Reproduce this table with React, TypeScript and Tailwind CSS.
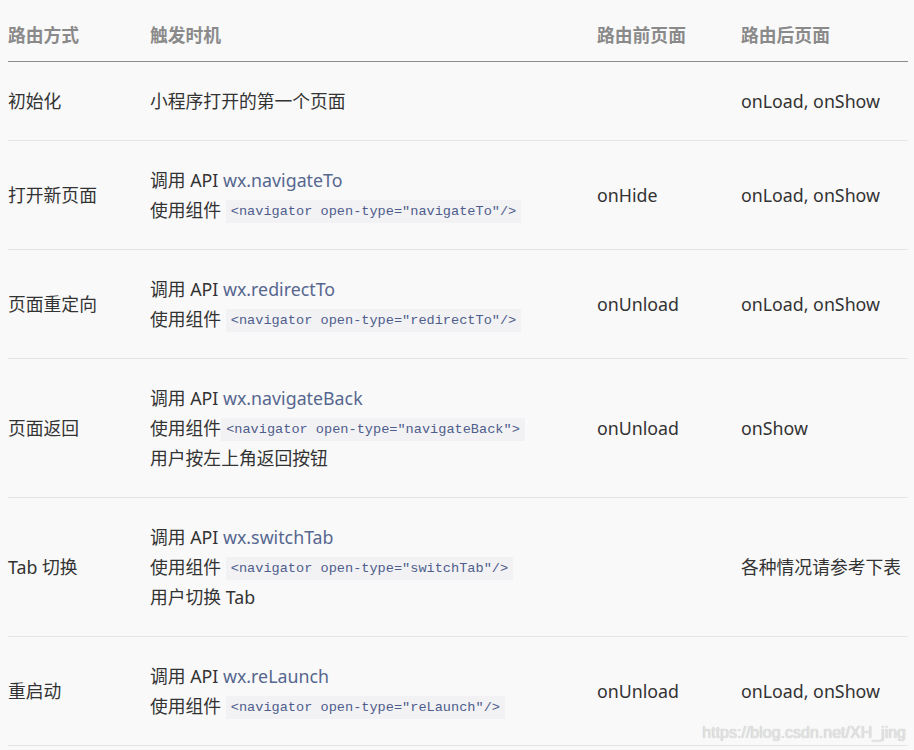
import React from "react";

const Code = ({ children, space = true }: { children: React.ReactNode; space?: boolean }) => (
  <>
    {space ? " " : ""}
    <code className="px-[5px] py-[4px] leading-none align-[2px] bg-[#f2f2f4] text-[#4f5d8c] text-[13.6px] font-['Liberation_Mono',monospace]">
      {children}
    </code>
  </>
);

const Api = ({ name }: { name: string }) => (
  <div>
    调用 API <span className="text-[#56678f]">{name}</span>
  </div>
);

type Row = { way: string; trigger: React.ReactNode; before: string; after: string };

const rows: Row[] = [
  { way: "初始化", trigger: <div>小程序打开的第一个页面</div>, before: "", after: "onLoad, onShow" },
  {
    way: "打开新页面",
    trigger: (
      <>
        <Api name="wx.navigateTo" />
        <div>使用组件<Code>{'<navigator open-type="navigateTo"/>'}</Code></div>
      </>
    ),
    before: "onHide",
    after: "onLoad, onShow",
  },
  {
    way: "页面重定向",
    trigger: (
      <>
        <Api name="wx.redirectTo" />
        <div>使用组件<Code>{'<navigator open-type="redirectTo"/>'}</Code></div>
      </>
    ),
    before: "onUnload",
    after: "onLoad, onShow",
  },
  {
    way: "页面返回",
    trigger: (
      <>
        <Api name="wx.navigateBack" />
        <div>使用组件<Code space={false}>{'<navigator open-type="navigateBack">'}</Code></div>
        <div>用户按左上角返回按钮</div>
      </>
    ),
    before: "onUnload",
    after: "onShow",
  },
  {
    way: "Tab 切换",
    trigger: (
      <>
        <Api name="wx.switchTab" />
        <div>使用组件<Code>{'<navigator open-type="switchTab"/>'}</Code></div>
        <div>用户切换 Tab</div>
      </>
    ),
    before: "",
    after: "各种情况请参考下表",
  },
  {
    way: "重启动",
    trigger: (
      <>
        <Api name="wx.reLaunch" />
        <div>使用组件<Code>{'<navigator open-type="reLaunch"/>'}</Code></div>
      </>
    ),
    before: "onUnload",
    after: "onLoad, onShow",
  },
];

export default function App() {
  return (
    <div className="relative w-[914px] h-[750px] overflow-hidden bg-[#f9f9f9] font-['Noto_Sans','Noto_Sans_CJK_SC',sans-serif] text-[17.8px] leading-[30px] text-[#333]">
      <div className="pl-2 pr-[6px]">
        <table className="w-full border-collapse">
          <colgroup>
            <col className="w-[142px]" />
            <col className="w-[447px]" />
            <col className="w-[144px]" />
            <col />
          </colgroup>
          <thead>
            <tr className="border-b border-[#8c8c8c]">
              {["路由方式", "触发时机", "路由前页面", "路由后页面"].map((h) => (
                <th key={h} className="text-left font-bold text-[#8a8a8a] pt-[20px] pb-[11px] align-middle">
                  {h}
                </th>
              ))}
            </tr>
          </thead>
          <tbody>
            {rows.map((r) => (
              <tr key={r.way} className="border-b border-[#e5e5e5]">
                <td className="py-6 align-middle">{r.way}</td>
                <td className="py-6 align-middle">{r.trigger}</td>
                <td className="py-6 align-middle">{r.before}</td>
                <td className="py-6 align-middle whitespace-nowrap">{r.after}</td>
              </tr>
            ))}
          </tbody>
        </table>
      </div>
      <div className="absolute right-[8px] bottom-[9px] font-['Liberation_Sans',sans-serif] text-[16px] leading-none text-[#e4e4e4] [text-shadow:0_0_1px_#b0b0b0]">
        https://blog.csdn.net/XH_jing
      </div>
    </div>
  );
}
